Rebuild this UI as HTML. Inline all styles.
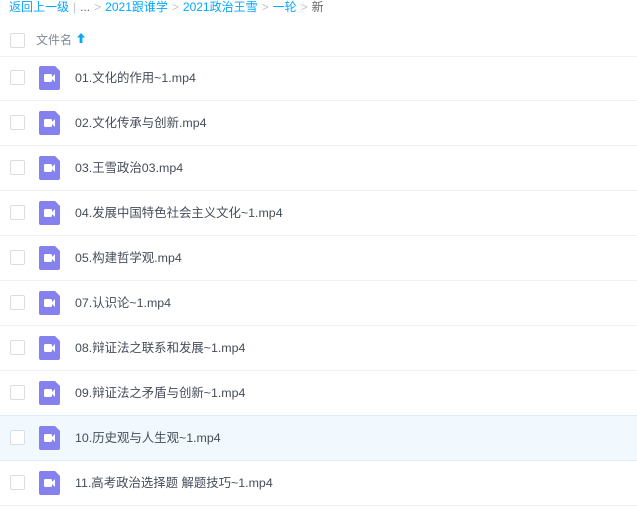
<!DOCTYPE html>
<html><head><meta charset="utf-8"><style>
body{margin:0;width:637px;height:530px;background:#fff;font-family:"Liberation Sans","Noto Sans CJK SC",sans-serif;font-size:12px;color:#454d5a;overflow:hidden;position:relative}
.bc{position:absolute;left:9px;top:0;line-height:14px;color:#06a7ff;white-space:nowrap}
.bc .g{color:#c0c4cc;margin:0 4px}
.bc .k{color:#666}
.hd{position:absolute;left:0;top:26px;width:637px;height:30px;border-bottom:1px solid #f1f2f6}
.cb{position:absolute;left:10px;width:13px;height:13px;border:1px solid #dadde3;border-radius:2px;background:#fff}
.hd .cb{top:7px}
.hd span{position:absolute;left:36px;top:5px;color:#818999}
.hd svg{position:absolute;left:77px;top:7px}
.row{position:absolute;left:0;width:637px;height:44px;border-bottom:1px solid #f1f2f6}
.row .cb{top:14px}
.row.hl{background:#f1f9fe;border-top:1px solid #dbeefb;border-bottom:1px solid #dbeefb;top:415px!important}
.ic{position:absolute;left:39px;top:10px;width:21px;height:24px;background:#8582f0;border-radius:2px;clip-path:polygon(0 0,16px 0,21px 5px,21px 24px,0 24px)}
.ic i{position:absolute;left:5px;top:8px;width:8px;height:8px;background:#fff;border-radius:1.5px}
.ic u{position:absolute;left:12px;top:8px;width:0;height:0;border-top:4px solid transparent;border-bottom:4px solid transparent;border-right:4px solid #fff}
.row span{position:absolute;left:75px;top:14px;line-height:16px;white-space:nowrap;font-size:12.4px}
</style></head><body>
<div class="bc">返回上一级<span class="g">|</span><span class="k">...</span><span class="g">&gt;</span>2021跟谁学<span class="g">&gt;</span>2021政治王雪<span class="g">&gt;</span>一轮<span class="g">&gt;</span><span class="k">新</span></div>
<div class="hd"><div class="cb"></div><span>文件名</span><svg width="8" height="10" viewBox="0 0 8 10"><path d="M4 0L0 4.5h2.6V10h2.8V4.5H8z" fill="#06a7ff"/></svg></div>
<div class="row" style="top:56px"><div class="cb"></div><div class="ic"><i></i><u></u></div><span>01.文化的作用~1.mp4</span></div>
<div class="row" style="top:101px"><div class="cb"></div><div class="ic"><i></i><u></u></div><span>02.文化传承与创新.mp4</span></div>
<div class="row" style="top:146px"><div class="cb"></div><div class="ic"><i></i><u></u></div><span>03.王雪政治03.mp4</span></div>
<div class="row" style="top:191px"><div class="cb"></div><div class="ic"><i></i><u></u></div><span>04.发展中国特色社会主义文化~1.mp4</span></div>
<div class="row" style="top:236px"><div class="cb"></div><div class="ic"><i></i><u></u></div><span>05.构建哲学观.mp4</span></div>
<div class="row" style="top:281px"><div class="cb"></div><div class="ic"><i></i><u></u></div><span>07.认识论~1.mp4</span></div>
<div class="row" style="top:326px"><div class="cb"></div><div class="ic"><i></i><u></u></div><span>08.辩证法之联系和发展~1.mp4</span></div>
<div class="row" style="top:371px"><div class="cb"></div><div class="ic"><i></i><u></u></div><span>09.辩证法之矛盾与创新~1.mp4</span></div>
<div class="row hl" style="top:415px"><div class="cb"></div><div class="ic"><i></i><u></u></div><span>10.历史观与人生观~1.mp4</span></div>
<div class="row" style="top:461px"><div class="cb"></div><div class="ic"><i></i><u></u></div><span>11.高考政治选择题 解题技巧~1.mp4</span></div>
</body></html>
